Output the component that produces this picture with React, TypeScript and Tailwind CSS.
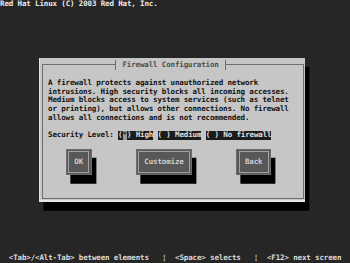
const mono = "font-['DejaVu_Sans_Mono','Liberation_Mono',monospace]";

function Button({ label, width }: { label: string; width: string }) {
  return (
    <div
      className={`${width} h-[26.3px] bg-[#585858] border border-[#6c6c6c] p-[1.5px] shadow-[4.375px_8.767px_0_0_#000]`}
    >
      <div className="h-full border border-[#a2a2a2] flex items-center justify-center text-[#cfcfcf]">
        {label}
      </div>
    </div>
  );
}

function Radio({ mark, label }: { mark?: boolean; label: string }) {
  return (
    <span className="inline-block h-[8.767px] bg-[#1c1c1c] text-[#e2e2e2]">
      (
      {mark ? (
        <span className="inline-block h-[8.767px] bg-[#9a9a9a] text-[#2a2a2a]">*</span>
      ) : (
        " "
      )}
      ) {label}
    </span>
  );
}

export default function App() {
  return (
    <div
      className={`${mono} w-[350px] h-[263px] overflow-hidden bg-[#262626] flex flex-col font-bold text-[7.5px] tracking-[-0.14px] leading-[8.767px] whitespace-pre`}
    >
      <div className="h-[8.767px] text-[#ececec]">Red Hat Linux (C) 2003 Red Hat, Inc.</div>

      {/* dialog window */}
      <div className="mt-[49.2px] ml-[39px] w-[266px] h-[143.6px] bg-[#c6c6c6] border-l border-[#e0e0e0] border-b-2 border-b-[#e6e6e6] pt-[6.5px] pl-[1.6px] pr-[1.5px] pb-[1px] flex flex-col shadow-[4.375px_8.767px_0_0_#000]">
        <div className="flex-1 border border-[#6e6e6e] flex flex-col text-[#111]">
          <div className="-mt-[5px] ml-[72.8px] w-[110.4px] h-[10px] bg-[#c6c6c6] border-x border-[#6e6e6e] flex items-center px-[1.7px] text-[#4e4e4e]">
            {" Firewall Configuration "}
          </div>

          <div className="mt-[8.4px] ml-[5.5px]">
            <div>A firewall protects against unauthorized network</div>
            <div>intrusions. High security blocks all incoming accesses.</div>
            <div>Medium blocks access to system services (such as telnet</div>
            <div>or printing), but allows other connections. No firewall</div>
            <div>allows all connections and is not recommended.</div>
          </div>

          <div className="mt-[8.767px] ml-[5.5px] h-[8.767px] flex">
            <span>Security Level: </span>
            <Radio mark label="High" />
            <span> </span>
            <Radio label="Medium" />
            <span> </span>
            <Radio label="No firewall" />
          </div>

          <div className="mt-[8.767px] ml-[23px] flex gap-[43.75px]">
            <Button label="OK" width="w-[26.25px]" />
            <Button label="Customize" width="w-[56.875px]" />
            <Button label="Back" width="w-[35px]" />
          </div>
        </div>
      </div>

      <div className="mt-auto h-[8.767px] text-[#dcdcdc]">
        {"  <Tab>/<Alt-Tab> between elements   ¦  <Space> selects   ¦  <F12> next screen"}
      </div>
    </div>
  );
}
